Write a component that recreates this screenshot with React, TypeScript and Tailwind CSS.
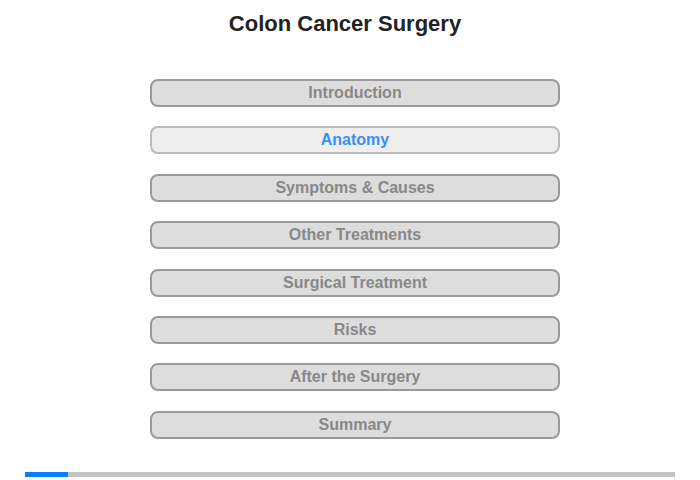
const SECTIONS = [
  "Introduction",
  "Anatomy",
  "Symptoms & Causes",
  "Other Treatments",
  "Surgical Treatment",
  "Risks",
  "After the Surgery",
  "Summary",
];

const ACTIVE = "Anatomy";

export default function App() {
  return (
    <div className="w-[700px] h-[480px] bg-white overflow-hidden font-['Liberation_Sans',Arial,sans-serif]">
      <h1 className="mt-[13px] pr-[10px] text-center text-[22px] leading-[22px] font-bold text-[#222]">
        Colon Cancer Surgery
      </h1>

      <div className="mt-[44px] ml-[150px] w-[410px] flex flex-col gap-[19.4px]">
        {SECTIONS.map((s) => {
          const active = s === ACTIVE;
          return (
            <div
              key={s}
              className={
                active
                  ? "h-[28px] rounded-[8px] border-2 border-[#bbb] bg-[#eee] text-center text-[16px] leading-[24px] font-bold text-[#3d8ef3]"
                  : "h-[28px] rounded-[8px] border-2 border-[#999] bg-[#ddd] text-center text-[16px] leading-[24px] font-bold text-[#888]"
              }
            >
              {s}
            </div>
          );
        })}
      </div>

      <div className="mt-[33px] ml-[25px] w-[650px] h-[5px] bg-[#c4c4c4] flex">
        <div className="w-[43px] h-full bg-[#0a7cff]" />
      </div>
    </div>
  );
}
